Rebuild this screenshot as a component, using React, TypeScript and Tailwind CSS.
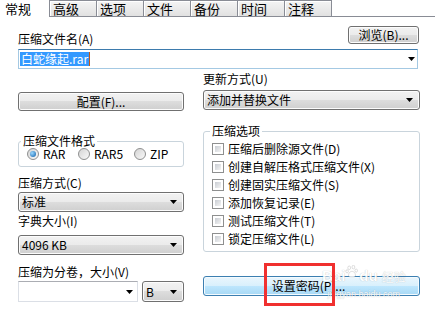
import React from 'react'

const tabs = ['高级', '选项', '文件', '备份', '时间', '注释']

function Arrow() {
  return (
    <svg width="7" height="4" viewBox="0 0 7 4" className="shrink-0">
      <path d="M0 0h7L3.5 4z" fill="#000" />
    </svg>
  )
}

function WinButton({ children, className = '' }: { children: React.ReactNode; className?: string }) {
  return (
    <div
      className={`flex items-center justify-center rounded-[3px] border border-[#707070] bg-[linear-gradient(#f2f2f2_0%,#ebebeb_49%,#dddddd_50%,#cfcfcf_100%)] shadow-[inset_0_0_0_1px_#fcfcfc] text-[12px] leading-[12px] ${className}`}
    >
      {children}
    </div>
  )
}

function DropList({ text, className = '' }: { text: string; className?: string }) {
  return (
    <div
      className={`flex items-center justify-between rounded-[3px] border border-[#707070] bg-[linear-gradient(#f2f2f2_0%,#ebebeb_49%,#dddddd_50%,#cfcfcf_100%)] shadow-[inset_0_0_0_1px_#fcfcfc] pl-[3px] pr-[6px] text-[12px] leading-[12px] ${className}`}
    >
      <span>{text}</span>
      <Arrow />
    </div>
  )
}

function Radio({ checked, label, className = '' }: { checked?: boolean; label: string; className?: string }) {
  return (
    <div className={`flex items-center gap-[4px] ${className}`}>
      <div className="flex h-[12px] w-[12px] items-center justify-center rounded-full border border-[#8e8f8f] bg-[linear-gradient(135deg,#d4d4d4,#f9f9f9)]">
        {checked && (
          <div className="h-[6px] w-[6px] rounded-full bg-[radial-gradient(circle_at_35%_35%,#9ad8ff,#0b5da9)]" />
        )}
      </div>
      <span className="text-[12px] leading-[12px]">{label}</span>
    </div>
  )
}

function Check({ label }: { label: string }) {
  return (
    <div className="flex h-[18px] items-center gap-[4px]">
      <div className="h-[12px] w-[12px] border border-[#8e8f8f] bg-white p-[2px]">
        <div className="h-full w-full bg-[linear-gradient(135deg,#c9cdd3,#f4f4f4)]" />
      </div>
      <span className="text-[12px] leading-[12px]">{label}</span>
    </div>
  )
}

export default function App() {
  return (
    <div className="relative h-[319px] w-[435px] overflow-hidden bg-white text-[12px] text-black font-['Noto_Sans_CJK_SC','Liberation_Sans',sans-serif]">
      {/* tab strip */}
      <div className="flex h-[17px]">
        <div className="h-[17px] w-[49px] bg-white pl-[5px] pt-[1px] text-[13px] leading-[15px]">常规</div>
        <div className="flex flex-1 items-start border-b border-[#898c95]">
          {tabs.map((t, i) => (
            <div
              key={t}
              className={`h-[16px] w-[48px] border-l border-r border-t border-[#898c95] bg-[linear-gradient(#f4f4f4,#e1e1e1)] pl-[3px] text-[13px] leading-[15px] shadow-[inset_1px_1px_0_#ffffff] ${i > 0 ? '-ml-px' : ''}`}
            >
              {t}
            </div>
          ))}
        </div>
      </div>

      <div className="pl-[18px] pr-[15px]">
        {/* archive name */}
        <div className="mt-[9px] flex h-[19px] items-end justify-between">
          <span className="leading-[12px]">压缩文件名(A)</span>
          <WinButton className="mr-[1px] h-[18px] w-[71px] self-start">浏览(B)...</WinButton>
        </div>
        <div className="mt-[4px] flex h-[20px] w-[400px] items-center justify-between border border-[#a4c9e3] border-t-[#3d7bad] pl-[1px] pr-[2px]">
          <div className="flex items-center">
            <span className="bg-[#3399ff] px-[1px] text-[12px] leading-[14px] text-white">白蛇缘起.rar</span>
            <span className="h-[14px] w-px bg-[#c05a1a]" />
          </div>
          <Arrow />
        </div>

        <div className="flex gap-[19px]">
          {/* left column */}
          <div className="flex w-[166px] flex-col">
            <WinButton className="mt-[23px] h-[19px] w-full">配置(F)...</WinButton>

            <fieldset className="mt-[24px] rounded-[3px] border border-[#c9d4dc] pb-[6px] pl-[8px] pt-[1px]">
              <legend className="-ml-[6px] px-[2px] text-[12px] leading-[12px]">压缩文件格式</legend>
              <div className="flex h-[12px] items-center">
                <Radio checked label="RAR" className="w-[51px]" />
                <Radio label="RAR5" className="w-[56px]" />
                <Radio label="ZIP" />
              </div>
            </fieldset>

            <span className="mt-[10px] leading-[12px]">压缩方式(C)</span>
            <DropList text="标准" className="mt-[3px] h-[20px] w-full" />
            <span className="mt-[3px] leading-[12px]">字典大小(I)</span>
            <DropList text="4096 KB" className="mt-[8px] h-[20px] w-full" />
            <span className="mt-[11px] leading-[12px]">压缩为分卷，大小(V)</span>
            <div className="mt-[3px] flex h-[21px] gap-[4px]">
              <div className="flex w-[120px] items-center justify-end border border-[#dbdfe6] border-t-[#abadb3] pr-[4px]">
                <Arrow />
              </div>
              <DropList text="B" className="flex-1" />
            </div>
          </div>

          {/* right column */}
          <div className="flex w-[217px] flex-col">
            <span className="mt-[4px] leading-[12px]">更新方式(U)</span>
            <DropList text="添加并替换文件" className="mt-[5px] h-[20px] w-full" />

            <fieldset className="mt-[15px] rounded-[3px] border border-[#c9d4dc] pb-[3px] pl-[8px] pt-[3px]">
              <legend className="-ml-[2px] px-[2px] text-[12px] leading-[12px]">压缩选项</legend>
              <Check label="压缩后删除源文件(D)" />
              <Check label="创建自解压格式压缩文件(X)" />
              <Check label="创建固实压缩文件(S)" />
              <Check label="添加恢复记录(E)" />
              <Check label="测试压缩文件(T)" />
              <Check label="锁定压缩文件(L)" />
            </fieldset>

            <div className="mt-[24px] flex h-[20px] w-full items-center justify-center rounded-[3px] border border-[#3c7fb1] bg-[linear-gradient(#eaf6fd_0%,#d9f0fc_49%,#bee6fd_50%,#a7d9f5_100%)] pr-[6px] shadow-[inset_0_0_0_1px_#f4fbff] text-[12px] leading-[12px]">
              设置密码(P)...
            </div>
          </div>
        </div>
      </div>

      {/* watermark */}
      <div className="pointer-events-none absolute left-[322px] top-[264px] flex flex-col items-center text-white opacity-90 [text-shadow:0_0_1px_rgba(0,0,0,0.3)]">
        <div className="flex items-end">
          <span className="text-[15px] font-bold leading-[16px] font-['Liberation_Sans',sans-serif]">Bai</span>
          <svg width="14" height="16" viewBox="0 0 20 22" className="mb-[4px]">
            <g fill="#ffffff" stroke="rgba(0,0,0,0.25)" strokeWidth="0.8">
              <ellipse cx="6" cy="5" rx="2" ry="2.6" />
              <ellipse cx="12" cy="4" rx="2" ry="2.6" />
              <ellipse cx="3" cy="10" rx="1.8" ry="2.3" />
              <ellipse cx="16" cy="9" rx="1.8" ry="2.3" />
              <path d="M5 16c0-4 3-6 5-6s5 2 5 6c0 2-2 2-5 2s-5 0-5-2z" />
            </g>
          </svg>
          <span className="text-[15px] font-bold leading-[16px] font-['Liberation_Sans',sans-serif]">du</span>
          <span className="ml-[4px] text-[12px] leading-[15px]">经验</span>
        </div>
        <span className="mt-[6px] text-[9px] leading-[9px] font-['Liberation_Sans',sans-serif]">jingyan.baidu.com</span>
      </div>

      {/* annotation */}
      <div className="pointer-events-none absolute left-[264px] top-[263px] h-[43px] w-[71px] border-[3px] border-[#f0302f]" />
    </div>
  )
}
